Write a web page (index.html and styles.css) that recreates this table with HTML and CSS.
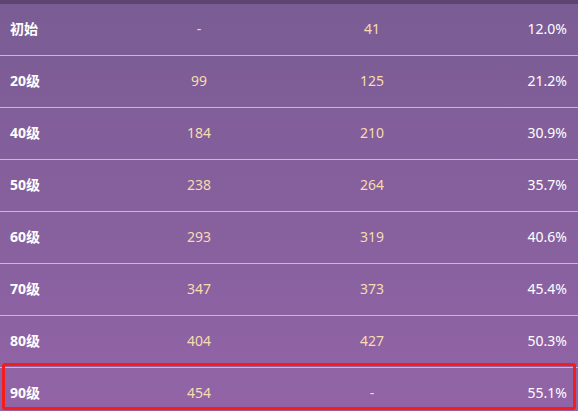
FILE: index.html
```html
<html lang="zh">
<head>
    <meta name="viewport" content="width=device-width, initial-scale=1.0">
    <title>等级数值</title>
    <link rel="stylesheet" href="styles.css">
</head>
<body>
    <div class="statTable">
        <div class="row"><span class="level">初始</span><span class="val">-</span><span class="val">41</span><span class="pct">12.0%</span></div>
        <div class="row"><span class="level">20级</span><span class="val">99</span><span class="val">125</span><span class="pct">21.2%</span></div>
        <div class="row"><span class="level">40级</span><span class="val">184</span><span class="val">210</span><span class="pct">30.9%</span></div>
        <div class="row"><span class="level">50级</span><span class="val">238</span><span class="val">264</span><span class="pct">35.7%</span></div>
        <div class="row"><span class="level">60级</span><span class="val">293</span><span class="val">319</span><span class="pct">40.6%</span></div>
        <div class="row"><span class="level">70级</span><span class="val">347</span><span class="val">373</span><span class="pct">45.4%</span></div>
        <div class="row"><span class="level">80级</span><span class="val">404</span><span class="val">427</span><span class="pct">50.3%</span></div>
        <div class="row last"><span class="level">90级</span><span class="val">454</span><span class="val">-</span><span class="pct">55.1%</span></div>
        <!-- highlight box around the max level -->
        <div class="highlight"></div>
    </div>
</body>
</html>
```

FILE: styles.css
```css
body {
    margin: 0;
    font-family: "Noto Sans", "Noto Sans CJK SC", sans-serif;
    font-size: 14px;
    background-color: #9264a6;
    overflow: hidden;
}
.statTable {
    position: relative;
    height: 411px;
    border-top: 4px solid #5c4473;
    background: linear-gradient(to bottom, #7a5c94, #9264a6);
    box-sizing: border-box;
}
.row {
    display: grid;
    grid-template-columns: 113px 172px 174px 1fr;
    align-items: center;
    height: 48px;
    padding-bottom: 3px;
    border-bottom: 1px solid #cbb6da;
}
.row.last {
    border-bottom: none;
}
.level {
    padding-left: 10px;
    color: #ffffff;
    font-weight: bold;
}
.val {
    text-align: center;
    color: #f6dcae;
}
.pct {
    text-align: right;
    padding-right: 11px;
    color: #ffffff;
}
.highlight {
    position: absolute;
    left: 2px;
    top: 359px;
    width: 574px;
    height: 47px;
    border: 3px solid #f51c1c;
    border-radius: 3px;
    box-sizing: border-box;
}
```
